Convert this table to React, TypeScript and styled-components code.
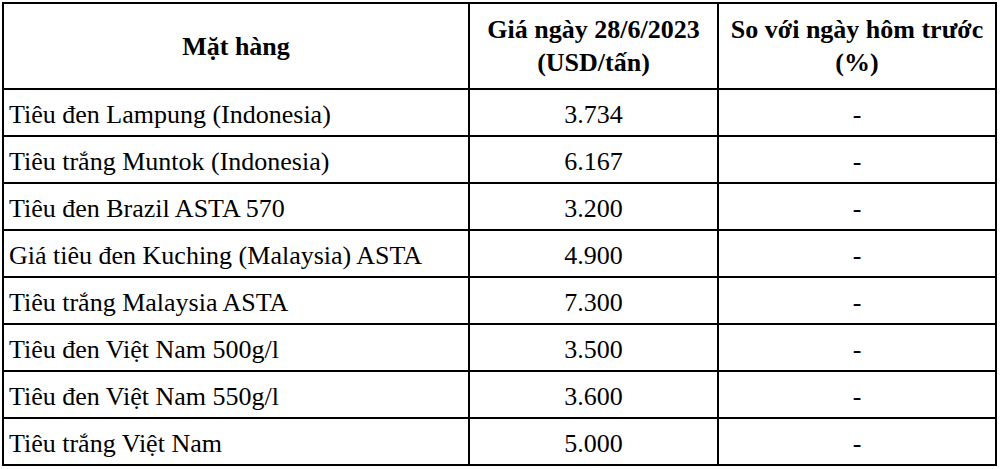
import React from 'react'
import styled, { createGlobalStyle } from 'styled-components'

const GlobalStyle = createGlobalStyle`
  html, body {
    margin: 0;
    padding: 0;
    background: #ffffff;
  }
  body {
    font-family: "Liberation Serif", "Times New Roman", serif;
    color: #000000;
  }
`

interface PriceRow {
  name: string,
  price: string,
  change: string,
}

const rows: PriceRow[] = [
  { name: 'Tiêu đen Lampung (Indonesia)', price: '3.734', change: '-' },
  { name: 'Tiêu trắng Muntok (Indonesia)', price: '6.167', change: '-' },
  { name: 'Tiêu đen Brazil ASTA 570', price: '3.200', change: '-' },
  { name: 'Giá tiêu đen Kuching (Malaysia) ASTA', price: '4.900', change: '-' },
  { name: 'Tiêu trắng Malaysia ASTA', price: '7.300', change: '-' },
  { name: 'Tiêu đen Việt Nam 500g/l', price: '3.500', change: '-' },
  { name: 'Tiêu đen Việt Nam 550g/l', price: '3.600', change: '-' },
  { name: 'Tiêu trắng Việt Nam', price: '5.000', change: '-' },
]

const App: React.FC = () => {
  return (
    <>
      <GlobalStyle />
      <StyledWrapper>
        <StyledTable>
          <colgroup>
            <col style={{ width: 466 }} />
            <col style={{ width: 249 }} />
            <col />
          </colgroup>
          <thead>
            <tr>
              <StyledHeadCell>Mặt hàng</StyledHeadCell>
              <StyledHeadCell>
                Giá ngày 28/6/2023
                <br />
                (USD/tấn)
              </StyledHeadCell>
              <StyledHeadCell>
                So với ngày hôm trước
                <br />
                (%)
              </StyledHeadCell>
            </tr>
          </thead>
          <tbody>
            {rows.map(row => (
              <tr key={row.name}>
                <StyledCell>{row.name}</StyledCell>
                <StyledCell align="center">{row.price}</StyledCell>
                <StyledCell align="center">{row.change}</StyledCell>
              </tr>
            ))}
          </tbody>
        </StyledTable>
      </StyledWrapper>
    </>
  )
}

const StyledWrapper = styled.div`
  padding: 2px 3px 0 2px;
`

const StyledTable = styled.table`
  border-collapse: collapse;
  table-layout: fixed;
  width: 995px;
  font-size: 26px;
`

const StyledHeadCell = styled.th`
  border: 2.5px solid #000000;
  font-weight: 700;
  height: 84px;
  line-height: 33px;
  padding: 0 4px;
  text-align: center;
  vertical-align: middle;
`

const StyledCell = styled.td<{ align?: 'left' | 'center' }>`
  border: 2.5px solid #000000;
  height: 41px;
  line-height: 28px;
  padding: 4px 5px 0;
  text-align: ${props => props.align || 'left'};
  vertical-align: middle;
`

export default App
